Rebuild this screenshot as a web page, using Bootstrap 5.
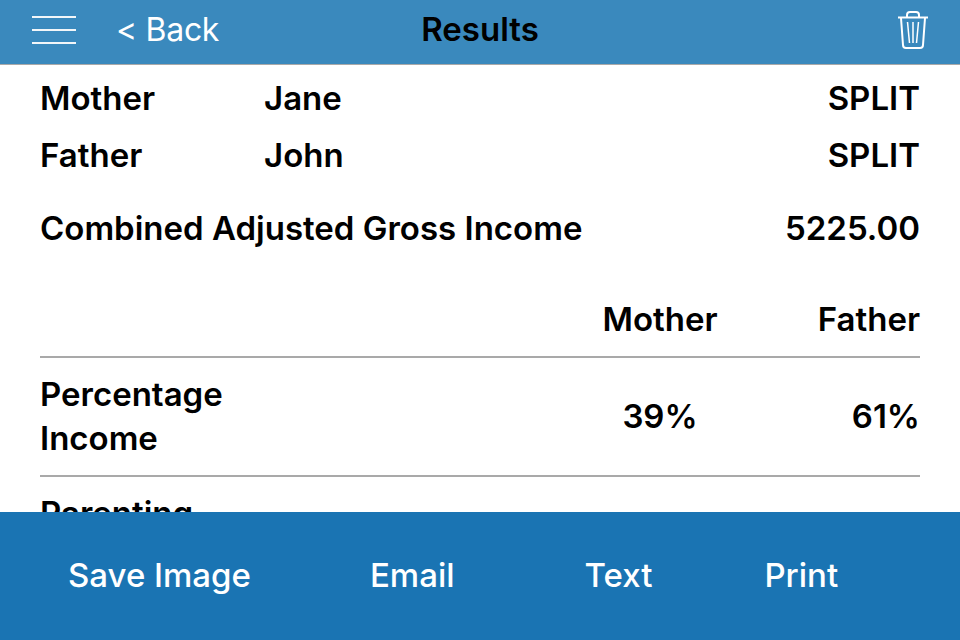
<!DOCTYPE html>
<html lang="en">
<head>
    <meta charset="UTF-8">
    <title>Results</title>
    <link href="https://cdn.jsdelivr.net/npm/bootstrap@5.3.0/dist/css/bootstrap.min.css" rel="stylesheet">
    <style>
        body {
            font-family: Inter, "Liberation Sans", sans-serif;
            color: #000;
        }

        .screen {
            width: 960px;
            height: 640px;
        }

        .top-bar {
            height: 65px;
            background-color: #3a89bd;
            border-bottom: 1px solid #a9a9a9;
            padding: 0 32px 4px;
        }

        .back-link {
            font-size: 32px;
            font-weight: 400;
            letter-spacing: -0.3px;
            color: #fff;
            margin-left: 40px;
        }

        .page-title {
            left: 0;
            right: 0;
            text-align: center;
            font-size: 33px;
            font-weight: 600;
        }

        .results {
            padding: 0 40px;
            font-size: 33px;
            font-weight: 600;
            line-height: 44px;
        }

        .name-row {
            height: 57px;
            padding-top: 11px;
        }

        .name-label {
            width: 224px;
        }

        .income-row {
            margin-top: 27px;
        }

        .head-row {
            margin-top: 47px;
            height: 61px;
            border-bottom: 2px solid #a9a9a9;
        }

        .data-row {
            border-bottom: 2px solid #a9a9a9;
            padding: 14px 0 15px;
        }

        .col-label {
            width: 220px;
        }

        .col-mother {
            width: 120px;
            margin-left: auto;
            text-align: center;
            white-space: nowrap;
        }

        .col-father {
            width: 200px;
            text-align: right;
        }

        .bottom-bar {
            height: 128px;
            background-color: #1a74b3;
            color: #fff;
            font-size: 33px;
            font-weight: 500;
        }

        .act-save { margin-left: 68px; }
        .act-email { margin-left: 119px; }
        .act-text { margin-left: 130px; }
        .act-print { margin-left: 112px; }
    </style>
</head>
<body class="m-0">
    <div class="screen d-flex flex-column overflow-hidden">

        <div class="top-bar d-flex align-items-center position-relative flex-shrink-0">
            <svg width="44" height="28" viewBox="0 0 44 28" fill="#f2f6f9">
                <rect y="0" width="44" height="2"/>
                <rect y="13" width="44" height="2"/>
                <rect y="26" width="44" height="2"/>
            </svg>
            <span class="back-link">&lt; Back</span>
            <span class="page-title position-absolute">Results</span>
            <svg class="ms-auto" width="30" height="38" viewBox="0 0 30 38" fill="none" stroke="#fff" stroke-width="2">
                <path d="M0 6.500H30"/>
                <path d="M9 6V4a3 3 0 0 1 3-3h6a3 3 0 0 1 3 3v2"/>
                <path d="M3 7l2 27a3 3 0 0 0 3 3h14a3 3 0 0 0 3-3l2-27"/>
                <path d="M9.500 11l2 21M15 11v21M20.500 11l-2 21" stroke-width="1.500"/>
            </svg>
        </div>

        <div class="results flex-grow-1 overflow-hidden">
            <div class="name-row d-flex">
                <div class="name-label">Mother</div>
                <div>Jane</div>
                <div class="ms-auto">SPLIT</div>
            </div>
            <div class="name-row d-flex">
                <div class="name-label">Father</div>
                <div>John</div>
                <div class="ms-auto">SPLIT</div>
            </div>
            <div class="income-row d-flex justify-content-between">
                <div>Combined Adjusted Gross Income</div>
                <div>5225.00</div>
            </div>
            <div class="head-row d-flex">
                <div class="col-label"></div>
                <div class="col-mother">Mother</div>
                <div class="col-father">Father</div>
            </div>
            <div class="data-row d-flex align-items-center">
                <div class="col-label">Percentage Income</div>
                <div class="col-mother">39%</div>
                <div class="col-father">61%</div>
            </div>
            <div class="data-row d-flex align-items-center">
                <div class="col-label">Parenting</div>
            </div>
        </div>

        <div class="bottom-bar d-flex align-items-center position-relative flex-shrink-0">
            <span class="act-save">Save Image</span>
            <span class="act-email">Email</span>
            <span class="act-text">Text</span>
            <span class="act-print">Print</span>
        </div>
    </div>
    <script src="https://cdn.jsdelivr.net/npm/bootstrap@5.3.0/dist/js/bootstrap.bundle.min.js"></script>
</body>
</html>
